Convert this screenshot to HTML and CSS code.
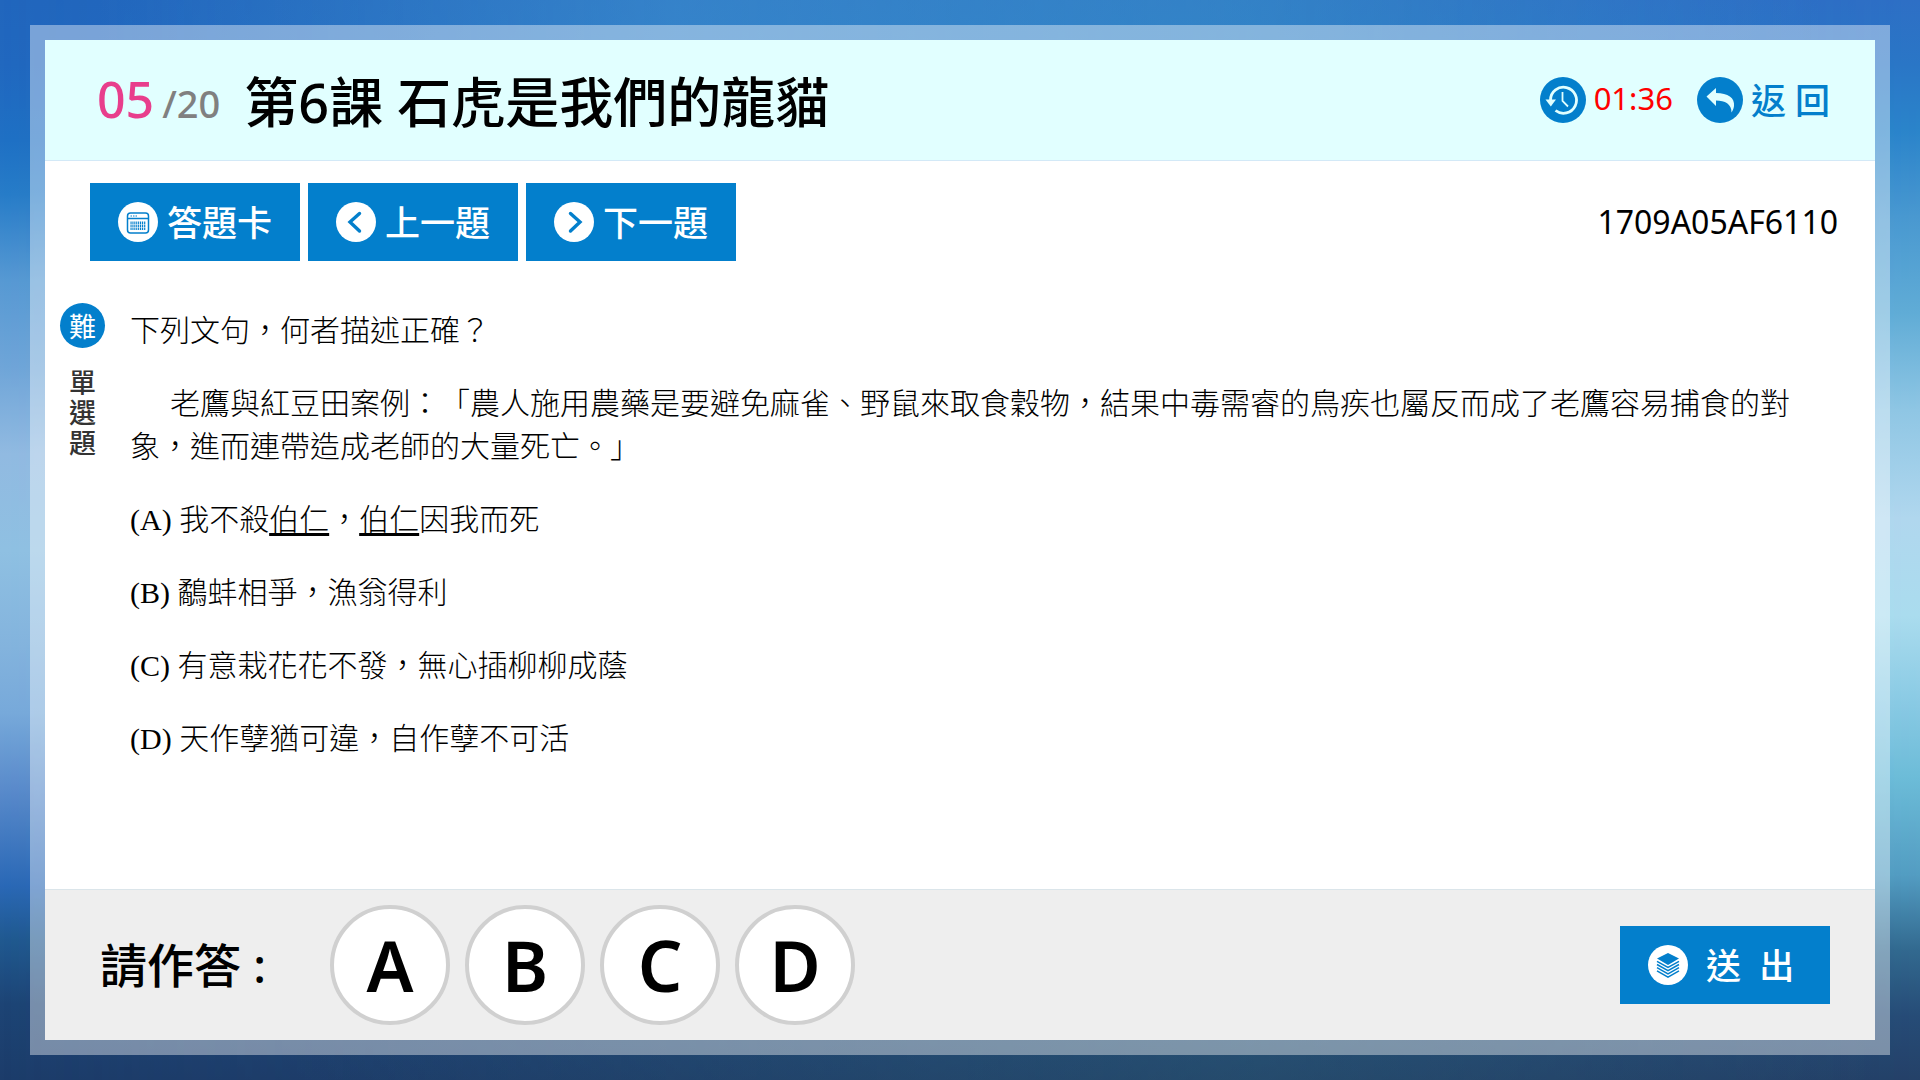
FILE: index.html
```html
<!DOCTYPE html>
<html lang="zh-Hant">
<head>
<meta charset="utf-8">
<meta name="viewport" content="width=device-width, initial-scale=1">
<title>第6課 石虎是我們的龍貓</title>
<link rel="stylesheet" href="styles.css">
</head>
<body>
<div class="frame">
  <div class="panel">
    <header class="header">
      <div class="progress"><span class="current">05</span><span class="total">/20</span></div>
      <h1 class="title">第6課 石虎是我們的龍貓</h1>
      <div class="timer">
        <svg class="round-icon" viewBox="0 0 46 46" aria-hidden="true">
          <circle cx="23" cy="23" r="23" fill="#037fcc"/>
          <path d="M10.500 23A13 13 0 1 1 15.500 33.500" fill="none" stroke="#e1ffff" stroke-width="2.800"/>
          <path d="M5.500 22.500h10.500l-5.200 7z" fill="#e1ffff"/>
          <path d="M22.500 15v9l5.500 5.500" fill="none" stroke="#e1ffff" stroke-width="1.800"/>
        </svg>
        <time class="time">01:36</time>
      </div>
      <a class="back" href="#">
        <svg class="round-icon" viewBox="0 0 46 46" aria-hidden="true">
          <circle cx="23" cy="23" r="23" fill="#037fcc"/>
          <path d="M9.500 19.500L19 11v5c12 0 19 5 18 13-.3 3-1.500 5-2.500 6.500C34.500 27 28 23.500 19 23.500V29z" fill="#e1ffff"/>
        </svg>
        <span class="back-text">返 回</span>
      </a>
    </header>

    <nav class="toolbar">
      <button class="btn" type="button">
        <svg class="btn-icon" viewBox="0 0 40 40" aria-hidden="true">
          <circle cx="20" cy="20" r="20" fill="#fff"/>
          <rect x="9.500" y="11" width="21" height="20" rx="3" fill="none" stroke="#037fcc" stroke-width="1.500"/>
          <path d="M10 16.500h20" stroke="#037fcc" stroke-width="1.500"/>
          <path d="M12.500 14h1.500M15 14h1.500M17.500 14h1.500" stroke="#037fcc" stroke-width="1.200"/>
          <path d="M12.500 20.700h15.500M12.500 23.700h15.500M12.500 26.700h15.500" stroke="#037fcc" stroke-width="2.600" stroke-dasharray="1.100 .8"/>
        </svg>
        <span class="btn-label">答題卡</span>
      </button>
      <button class="btn" type="button">
        <svg class="btn-icon" viewBox="0 0 40 40" aria-hidden="true">
          <circle cx="20" cy="20" r="20" fill="#fff"/>
          <path d="M23.500 11.500L14 20l9.500 9" fill="none" stroke="#037fcc" stroke-width="3.400" stroke-linecap="round"/>
        </svg>
        <span class="btn-label">上一題</span>
      </button>
      <button class="btn" type="button">
        <svg class="btn-icon" viewBox="0 0 40 40" aria-hidden="true">
          <circle cx="20" cy="20" r="20" fill="#fff"/>
          <path d="M16.500 11.500L26 20l-9.500 9" fill="none" stroke="#037fcc" stroke-width="3.400" stroke-linecap="round"/>
        </svg>
        <span class="btn-label">下一題</span>
      </button>
      <span class="code">1709A05AF6110</span>
    </nav>

    <main class="question">
      <aside class="tags">
        <span class="level">難</span>
        <span class="kind">單選題</span>
      </aside>
      <div class="body">
        <p>下列文句，何者描述正確？</p>
        <p class="passage">老鷹與紅豆田案例：「農人施用農藥是要避免麻雀、野鼠來取食穀物，結果中毒需睿的鳥疾也屬反而成了老鷹容易捕食的對象，進而連帶造成老師的大量死亡。」</p>
        <p>(A) 我不殺<u>伯仁</u>，<u>伯仁</u>因我而死</p>
        <p>(B) 鷸蚌相爭，漁翁得利</p>
        <p>(C) 有意栽花花不發，無心插柳柳成蔭</p>
        <p>(D) 天作孽猶可違，自作孽不可活</p>
      </div>
    </main>

    <footer class="footer">
      <span class="prompt">請作答 :</span>
      <div class="choices">
        <button class="choice" type="button">A</button>
        <button class="choice" type="button">B</button>
        <button class="choice" type="button">C</button>
        <button class="choice" type="button">D</button>
      </div>
      <button class="btn submit" type="submit">
        <svg class="btn-icon" viewBox="0 0 40 40" aria-hidden="true">
          <circle cx="20" cy="20" r="20" fill="#fff"/>
          <path d="M20 8l11 5.500L20 20 9 13.500z" fill="#037fcc"/>
          <path d="M9 16.300l11 6.200 11-6.200M9 19.500l11 6.200 11-6.200M9 22.700l11 6.200 11-6.200M9 25.900l11 6.200 11-6.200" fill="none" stroke="#037fcc" stroke-width="1.500"/>
        </svg>
        <span class="btn-label">送&nbsp; 出</span>
      </button>
    </footer>
  </div>
</div>
</body>
</html>
```

FILE: styles.css
```css
* { box-sizing: border-box; }

body {
  margin: 0;
  min-height: 100vh;
  padding: 25px 30px;
  display: flex;
  position: relative;
  z-index: 0;
  font-family: "Noto Sans", "Noto Sans CJK TC", sans-serif;
  color: #000;
  background: linear-gradient(#2166bd 0%, #2168bf 6%, #1f70c4 13%, #277cc8 18%, #5799d3 26%, #6fa5d8 34%, #91bae1 42%, #8fc0e2 51%, #83b3dd 60%, #77a9da 66%, #5a8bcb 73%, #2a68b6 82%, #205990 87%, #1d4475 93%, #1c3c6a 100%);
}

body::before,
body::after {
  content: "";
  position: absolute;
  inset: 0;
  z-index: -1;
}

body::before {
  background: linear-gradient(#2e6fc5 0%, #2a76c6 6%, #2a84ca 12%, #4998d0 20%, #60acd6 29%, #8fc6e4 38%, #b0d7ee 48%, #aadcee 57%, #8acae4 65%, #6cbcd8 72%, #539dc2 81%, #32698f 88%, #264c77 94%, #244168 100%);
  -webkit-mask-image: linear-gradient(90deg, transparent, #000);
  mask-image: linear-gradient(90deg, transparent, #000);
}

/* brighter sky towards the middle, teal tint near the ground */
body::after {
  background:
    linear-gradient(90deg, transparent 5%, rgba(75, 165, 215, .42) 35%, rgba(65, 160, 205, .42) 65%, transparent 95%) top / 100% 50% no-repeat,
    linear-gradient(90deg, transparent 15%, rgba(50, 110, 120, .25) 65%, transparent 98%) bottom / 100% 50% no-repeat;
}

.frame {
  flex: 1;
  display: flex;
  padding: 15px;
  background: rgba(255, 255, 255, .4);
}

.panel {
  flex: 1;
  display: flex;
  flex-direction: column;
  background: #fff;
}

.header {
  display: flex;
  align-items: center;
  min-height: 121px;
  padding: 0 45px 0 52px;
  background: #e1ffff;
  border-bottom: 1px solid #d3e9f7;
}

.progress { padding-bottom: 3px; color: #808080; font-weight: 500; }
.current { margin-right: 8px; font-size: 50px; color: #e83e8c; }
.total { font-size: 38px; }

.title {
  flex: 1;
  margin: 0 0 0 24px;
  padding-top: 3px;
  font-size: 54px;
  font-weight: 500;
  line-height: 1;
}

.round-icon { width: 46px; height: 46px; flex: none; }
.timer, .back { display: flex; align-items: center; gap: 8px; }
.time { padding-bottom: 4px; font-size: 31px; color: #f00; }
.back { margin-left: 24px; color: #037fcc; text-decoration: none; }
.back-text { padding-bottom: 4px; font-size: 35px; font-weight: 500; }

.toolbar {
  display: flex;
  align-items: center;
  gap: 8px;
  padding: 22px 37px 0 45px;
}

.btn {
  display: flex;
  align-items: center;
  justify-content: center;
  gap: 9px;
  width: 210px;
  height: 78px;
  padding: 0;
  border: 0;
  background: #037fcc;
  color: #fff;
  font: 500 35px "Noto Sans", "Noto Sans CJK TC", sans-serif;
}
.btn-icon { width: 40px; height: 40px; flex: none; }
.btn-label { padding-bottom: 4px; }

.code { margin-left: auto; padding-bottom: 2px; font-size: 32px; }

.question {
  flex: 1;
  display: flex;
  gap: 25px;
  padding: 42px 50px 0 15px;
}

.tags {
  display: flex;
  flex-direction: column;
  align-items: center;
  gap: 20px;
  width: 45px;
}
.level {
  display: flex;
  align-items: center;
  justify-content: center;
  width: 45px;
  height: 45px;
  border-radius: 50%;
  background: #037fcc;
  color: #fff;
  font-size: 27px;
}
.kind {
  width: 28px;
  font-size: 27px;
  font-weight: 500;
  line-height: 30px;
  color: #333;
  text-align: center;
}

.body {
  flex: 1;
  padding-top: 6px;
  font-family: "Liberation Serif", "Noto Sans CJK TC", serif;
  font-size: 30px;
  font-weight: 300;
  line-height: 43px;
  text-spacing-trim: space-all;
}
.body p { margin: 0 0 30px; }
.body .passage { text-indent: 40px; }
.body u { text-decoration-thickness: 3px; text-underline-offset: 3px; }

.footer {
  display: flex;
  align-items: center;
  min-height: 151px;
  padding: 0 45px 0 55px;
  background: #eee;
  border-top: 1px solid #dbe5ea;
}
.prompt { padding-bottom: 6px; font-size: 47px; font-weight: 500; }
.choices { flex: 1; display: flex; gap: 15px; margin-left: 64px; }
.choice {
  width: 120px;
  height: 120px;
  padding: 0;
  border: 4px solid #d0d0d0;
  border-radius: 50%;
  background: #fff;
  color: #000;
  font: 600 70px "Noto Sans", sans-serif;
}
.submit { justify-content: flex-start; gap: 18px; padding-left: 28px; }
```
